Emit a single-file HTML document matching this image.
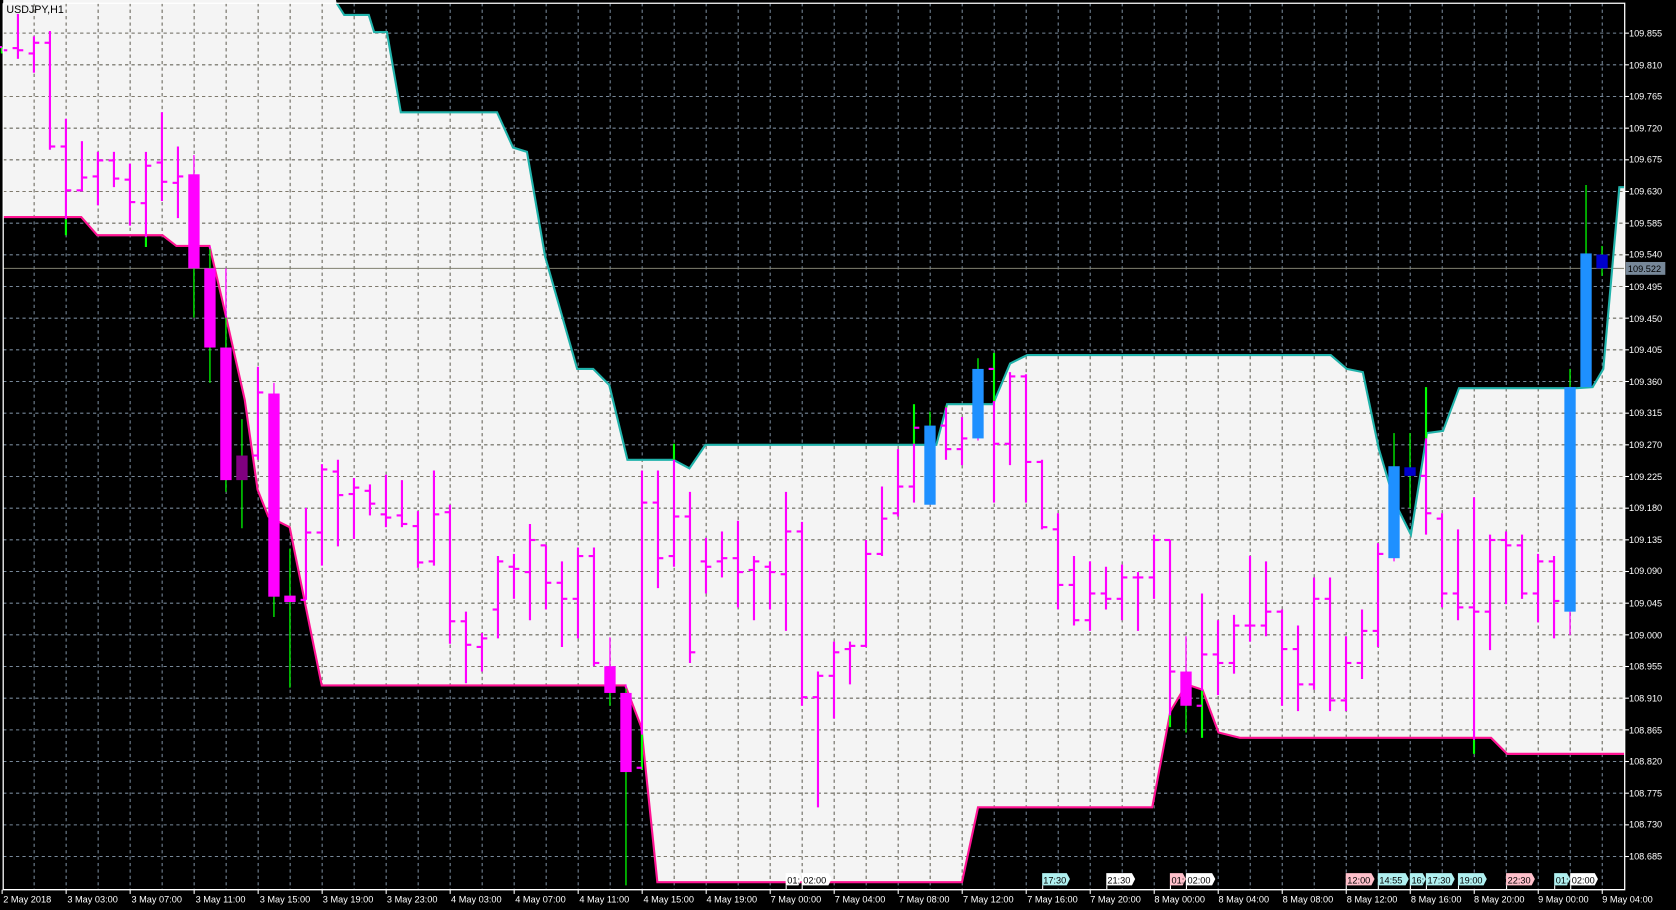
<!DOCTYPE html>
<html><head><meta charset="utf-8"><style>
html,body{margin:0;padding:0;background:#000;width:1676px;height:910px;overflow:hidden}
svg{display:block}
text{font-family:"Liberation Sans",sans-serif}
</style></head><body>
<svg id="s" width="1676" height="910" viewBox="0 0 1568 851" preserveAspectRatio="none" xmlns="http://www.w3.org/2000/svg">
<defs><clipPath id="cp"><polygon id="cpoly" points=""/></clipPath></defs>
<rect x="0" y="0" width="1568" height="851" fill="#000"/>
<polygon id="fill" fill="#f4f4f4" points=""/>
<g id="gridB" stroke="#778899" stroke-width="1" stroke-dasharray="3,3"></g>
<g id="gridW" stroke="#807a6c" stroke-width="1" stroke-dasharray="3,3" clip-path="url(#cp)"></g>
<line x1="3" y1="251" x2="1520" y2="251" stroke="#808070" stroke-width="1"/>
<polyline id="up" fill="none" stroke="#20b2aa" stroke-width="2" points=""/>
<polyline id="lo" fill="none" stroke="#ff1493" stroke-width="2" points=""/>
<g id="bars"></g>
<text x="6" y="12" font-size="10" fill="#000">USDJPY,H1</text>
<!-- frame -->
<polyline points="3,3 1520,3 1520,832 3,832 3,3" fill="none" stroke="#fff" stroke-width="1.2"/>
<g id="pticks" stroke="#fff" stroke-width="1"></g>
<g font-size="8.6" fill="#fff">
<text x="1524" y="34">109.855</text><text x="1524" y="64">109.810</text><text x="1524" y="93">109.765</text>
<text x="1524" y="123">109.720</text><text x="1524" y="152">109.675</text><text x="1524" y="182">109.630</text>
<text x="1524" y="212">109.585</text><text x="1524" y="241">109.540</text><text x="1524" y="271">109.495</text>
<text x="1524" y="301">109.450</text><text x="1524" y="330">109.405</text><text x="1524" y="360">109.360</text>
<text x="1524" y="389">109.315</text><text x="1524" y="419">109.270</text><text x="1524" y="449">109.225</text>
<text x="1524" y="478">109.180</text><text x="1524" y="508">109.135</text><text x="1524" y="537">109.090</text>
<text x="1524" y="567">109.045</text><text x="1524" y="597">109.000</text><text x="1524" y="626">108.955</text>
<text x="1524" y="656">108.910</text><text x="1524" y="686">108.865</text><text x="1524" y="715">108.820</text>
<text x="1524" y="745">108.775</text><text x="1524" y="774">108.730</text><text x="1524" y="804">108.685</text>
</g>
<rect x="1521" y="245" width="37" height="12" fill="#778899"/>
<text x="1523" y="254.5" font-size="8.6" fill="#000">109.522</text>
<g id="tticks" stroke="#fff" stroke-width="1"></g>
<g font-size="8.6" fill="#fff">
<text x="3" y="844">2 May 2018</text>
<text x="63" y="844">3 May 03:00</text><text x="123" y="844">3 May 07:00</text><text x="183" y="844">3 May 11:00</text>
<text x="243" y="844">3 May 15:00</text><text x="302" y="844">3 May 19:00</text><text x="362" y="844">3 May 23:00</text>
<text x="422" y="844">4 May 03:00</text><text x="482" y="844">4 May 07:00</text><text x="542" y="844">4 May 11:00</text>
<text x="602" y="844">4 May 15:00</text><text x="661" y="844">4 May 19:00</text><text x="721" y="844">7 May 00:00</text>
<text x="781" y="844">7 May 04:00</text><text x="841" y="844">7 May 08:00</text><text x="901" y="844">7 May 12:00</text>
<text x="961" y="844">7 May 16:00</text><text x="1020" y="844">7 May 20:00</text><text x="1080" y="844">8 May 00:00</text>
<text x="1140" y="844">8 May 04:00</text><text x="1200" y="844">8 May 08:00</text><text x="1260" y="844">8 May 12:00</text>
<text x="1320" y="844">8 May 16:00</text><text x="1379" y="844">8 May 20:00</text><text x="1439" y="844">9 May 00:00</text>
<text x="1499" y="844">9 May 04:00</text>
</g>
<g id="tags" font-size="8.6" fill="#000"></g>
<g font-size="8.6" fill="#000">
<text x="736.5" y="826">01:</text><text x="751.5" y="826">02:00</text>
<text x="976" y="826">17:30</text><text x="1036" y="826">21:30</text>
<text x="1096" y="826">01:</text><text x="1111" y="826">02:00</text>
<text x="1260.5" y="826">12:00</text><text x="1290.5" y="826">14:55</text><text x="1320.5" y="826">16:</text>
<text x="1335.5" y="826">17:30</text><text x="1365.5" y="826">19:00</text><text x="1410.5" y="826">22:30</text>
<text x="1455.5" y="826">01:</text><text x="1470.5" y="826">02:00</text>
</g>
</svg>
<script>
var NS="http://www.w3.org/2000/svg";
function el(p,t,a){var e=document.createElementNS(NS,t);for(var k in a)e.setAttribute(k,a[k]);p.appendChild(e);return e;}
var U=[[3,-10],[312,-10],[315,3],[322,14],[345,14],[350,30],[362,30],[375,105],[465,105],[480,138],[493,142],[510,240],[540,345],[555,345],[570,360],[587,430],[630,430],[645,438],[660,416],[876,416],[886,378],[929,378],[945,340],[961,332],[1245,332],[1260,345],[1275,348],[1290,420],[1305,470],[1320,500],[1335,405],[1350,403],[1365,363],[1475,363],[1490,362],[1500,345],[1515,175],[1520,175]];
var L=[[3,203],[76,203],[91,220],[152,220],[165,230],[196,230],[208,281],[229,374],[241,458],[251,483],[271,493],[301,641],[585,641],[600,680],[615,825],[900,825],[915,755],[1078,755],[1095,665],[1110,640],[1125,645],[1140,685],[1160,690],[1395,690],[1410,705],[1520,705]];
function interp(A,x){for(var i=0;i<A.length-1;i++){if(x>=A[i][0]&&x<=A[i+1][0]){var t=(x-A[i][0])/((A[i+1][0]-A[i][0])||1);return A[i][1]+t*(A[i+1][1]-A[i][1]);}}return A[A.length-1][1];}
var poly=U.map(p=>p.join(',')).concat(L.slice().reverse().map(p=>p.join(','))).join(' ');
document.getElementById('fill').setAttribute('points',poly);
document.getElementById('cpoly').setAttribute('points',poly);
document.getElementById('up').setAttribute('points',U.slice(2).map(p=>p.join(',')).join(' '));
document.getElementById('lo').setAttribute('points',L.map(p=>p.join(',')).join(' '));
// grid
['gridB','gridW'].forEach(function(id){var g=document.getElementById(id);
for(var k=0;k<=26;k++){var y=31+29.615*k;el(g,'line',{x1:3,y1:y,x2:1520,y2:y});}
for(var j=1;j<=50;j++){var x=2+29.94*j;if(x>1519)break;el(g,'line',{x1:x,y1:3,x2:x,y2:832});}});
var pt=document.getElementById('pticks');for(var k=0;k<=26;k++){var y=31+29.615*k;el(pt,'line',{x1:1520,y1:y,x2:1524,y2:y});}
var tt=document.getElementById('tticks');for(var k=0;k<=25;k++){var x=2+59.88*k;el(tt,'line',{x1:x,y1:832,x2:x,y2:836});}
// tags
var tags=[[735,15,'#fff'],[750,28,'#fff'],[975,26,'#b0f0f0'],[1035,27,'#fff'],[1094.5,15,'#ffc0cb'],[1109.5,27.5,'#fff'],[1259,27,'#ffc0cb'],[1289,29,'#b0f0f0'],[1319,15,'#b0f0f0'],[1334,27,'#b0f0f0'],[1364,27,'#b0f0f0'],[1409,27,'#ffc0cb'],[1454,15,'#b0f0f0'],[1469,26,'#fff']];
var tg=document.getElementById('tags');
tags.forEach(function(t){var x=t[0],w=t[1];el(tg,'polygon',{points:x+',816.5 '+(x+w-3)+',816.5 '+(x+w)+',822 '+(x+w-3)+',828 '+x+',828',fill:t[2]});el(tg,'line',{x1:x+0.5,y1:828,x2:x+0.5,y2:832,stroke:'#fff'});});
// bars: i,h,l,o,c,bodycolor(optional)
var B=[[0,44,50,44,47],[1,13,55,45,47],[2,34,68,50,40],[3,29,140,40,137],[4,111,220,137,178],[5,132,179,178,166],[6,142,192,165,150],[7,142,175,150,167],[8,153,211,168,189],[9,142,231,190,155],[10,105,188,152,170],[11,137,204,171,165],
[12,145,297,163,251,'#ff00ff'],[13,230,358,251,325,'#ff00ff'],[14,251,460,325,449,'#ff00ff'],[15,392,494,449,426,'#800080'],[16,343,430,426,367],[17,358,577,368,558,'#ff00ff'],[18,513,643,557,563,'#ff00ff'],
[19,475,561,561,498],[20,434,529,498,439],[21,430,511,441,463],[22,447,504,462,456],[23,453,482,459,471],[24,444,493,481,484],[25,449,493,482,490],[26,478,531,492,526],[27,440,529,525,481],[28,472,602,479,581],[29,572,639,581,603],[30,592,628,605,597],
[31,520,597,570,525],[32,518,560,530,532],[33,490,580,535,505],[34,510,570,510,545],[35,525,605,545,560],[36,512,597,560,520],[37,512,623,520,620],[38,596,660,623,648,'#ff00ff'],[39,640,828,648,722,'#ff00ff'],
[40,440,720,718,470],[41,440,550,470,522],[42,415,530,520,483],[43,460,620,483,610],[44,503,555,525,530],[45,497,540,525,522],[46,487,568,522,535],[47,520,580,533,525],[48,525,570,530,535],[49,460,590,537,497],[50,488,660,497,652],
[51,628,755,652,632],[52,600,672,632,610],[53,600,640,607,604],[54,505,605,604,518],[55,455,520,518,485],[56,420,483,480,455],[57,378,470,455,400],[58,385,472,472,398,'#1e90ff'],[59,380,430,398,420],[60,390,435,420,410],
[61,335,412,410,345,'#1e90ff'],[62,330,470,345,415],[63,348,435,415,352],[64,350,470,352,432],[65,430,495,432,493],[66,480,570,495,547],[67,520,585,547,580],[68,525,590,580,555],[69,530,570,555,560],[70,528,580,560,540],
[71,535,590,540,540],[72,500,560,540,505],[73,505,680,505,628],[74,595,685,628,660,'#ff00ff'],[75,555,690,660,612],[76,580,650,612,620],[77,575,630,620,585],[78,520,600,585,585],[79,525,595,585,572],[80,570,660,572,607],
[81,585,665,607,640],[82,540,645,640,560],[83,540,665,560,655],[84,595,665,655,620],[85,570,635,620,590],[86,508,605,590,518],[87,405,525,522,436,'#1e90ff'],[88,405,475,445,437,'#0000cd'],[89,362,500,445,480],[90,480,568,485,555],
[91,495,580,555,568],[92,465,705,568,572],[93,500,608,572,505],[94,497,565,505,510],[95,500,560,510,555],[96,518,582,555,525],[97,520,597,525,562],[98,345,594,572,362,'#1e90ff'],[99,173,362,362,237,'#1e90ff'],[100,230,258,238,251,'#0000cd']];
var bg=document.getElementById('bars');
function vseg(x,y1,y2,w){ // color segments: lime outside band
 var N=Math.ceil((y2-y1)/1);var cur=null,start=y1;
 function col(y){var u=interp(U,x),l=interp(L,x);return (y<u-1||y>l+1)?'#00ff00':'#ff00ff';}
 var ys=[];for(var y=y1;y<=y2;y+=1){ys.push(y);}ys.push(y2);
 for(var k=0;k<ys.length;k++){var c=col(ys[k]);if(c!==cur){if(cur!==null)el(bg,'line',{x1:x,y1:start,x2:x,y2:ys[k],stroke:cur,'stroke-width':w});cur=c;start=ys[k];}}
 el(bg,'line',{x1:x,y1:start,x2:x,y2:y2,stroke:cur,'stroke-width':w});
}
B.forEach(function(b){var x=1.8+14.97*b[0];
 if(b[5]){vseg(x,b[1],b[2],1.2);var t=Math.min(b[3],b[4]),h=Math.abs(b[3]-b[4])||2;el(bg,'rect',{x:x-5.3,y:t,width:10.6,height:h,fill:b[5]});}
 else{vseg(x,b[1],b[2],2);el(bg,'line',{x1:x-5,y1:b[3],x2:x,y2:b[3],stroke:'#ff00ff','stroke-width':2});el(bg,'line',{x1:x,y1:b[4],x2:x+5,y2:b[4],stroke:'#ff00ff','stroke-width':2});}
});
</script>
</body></html>
